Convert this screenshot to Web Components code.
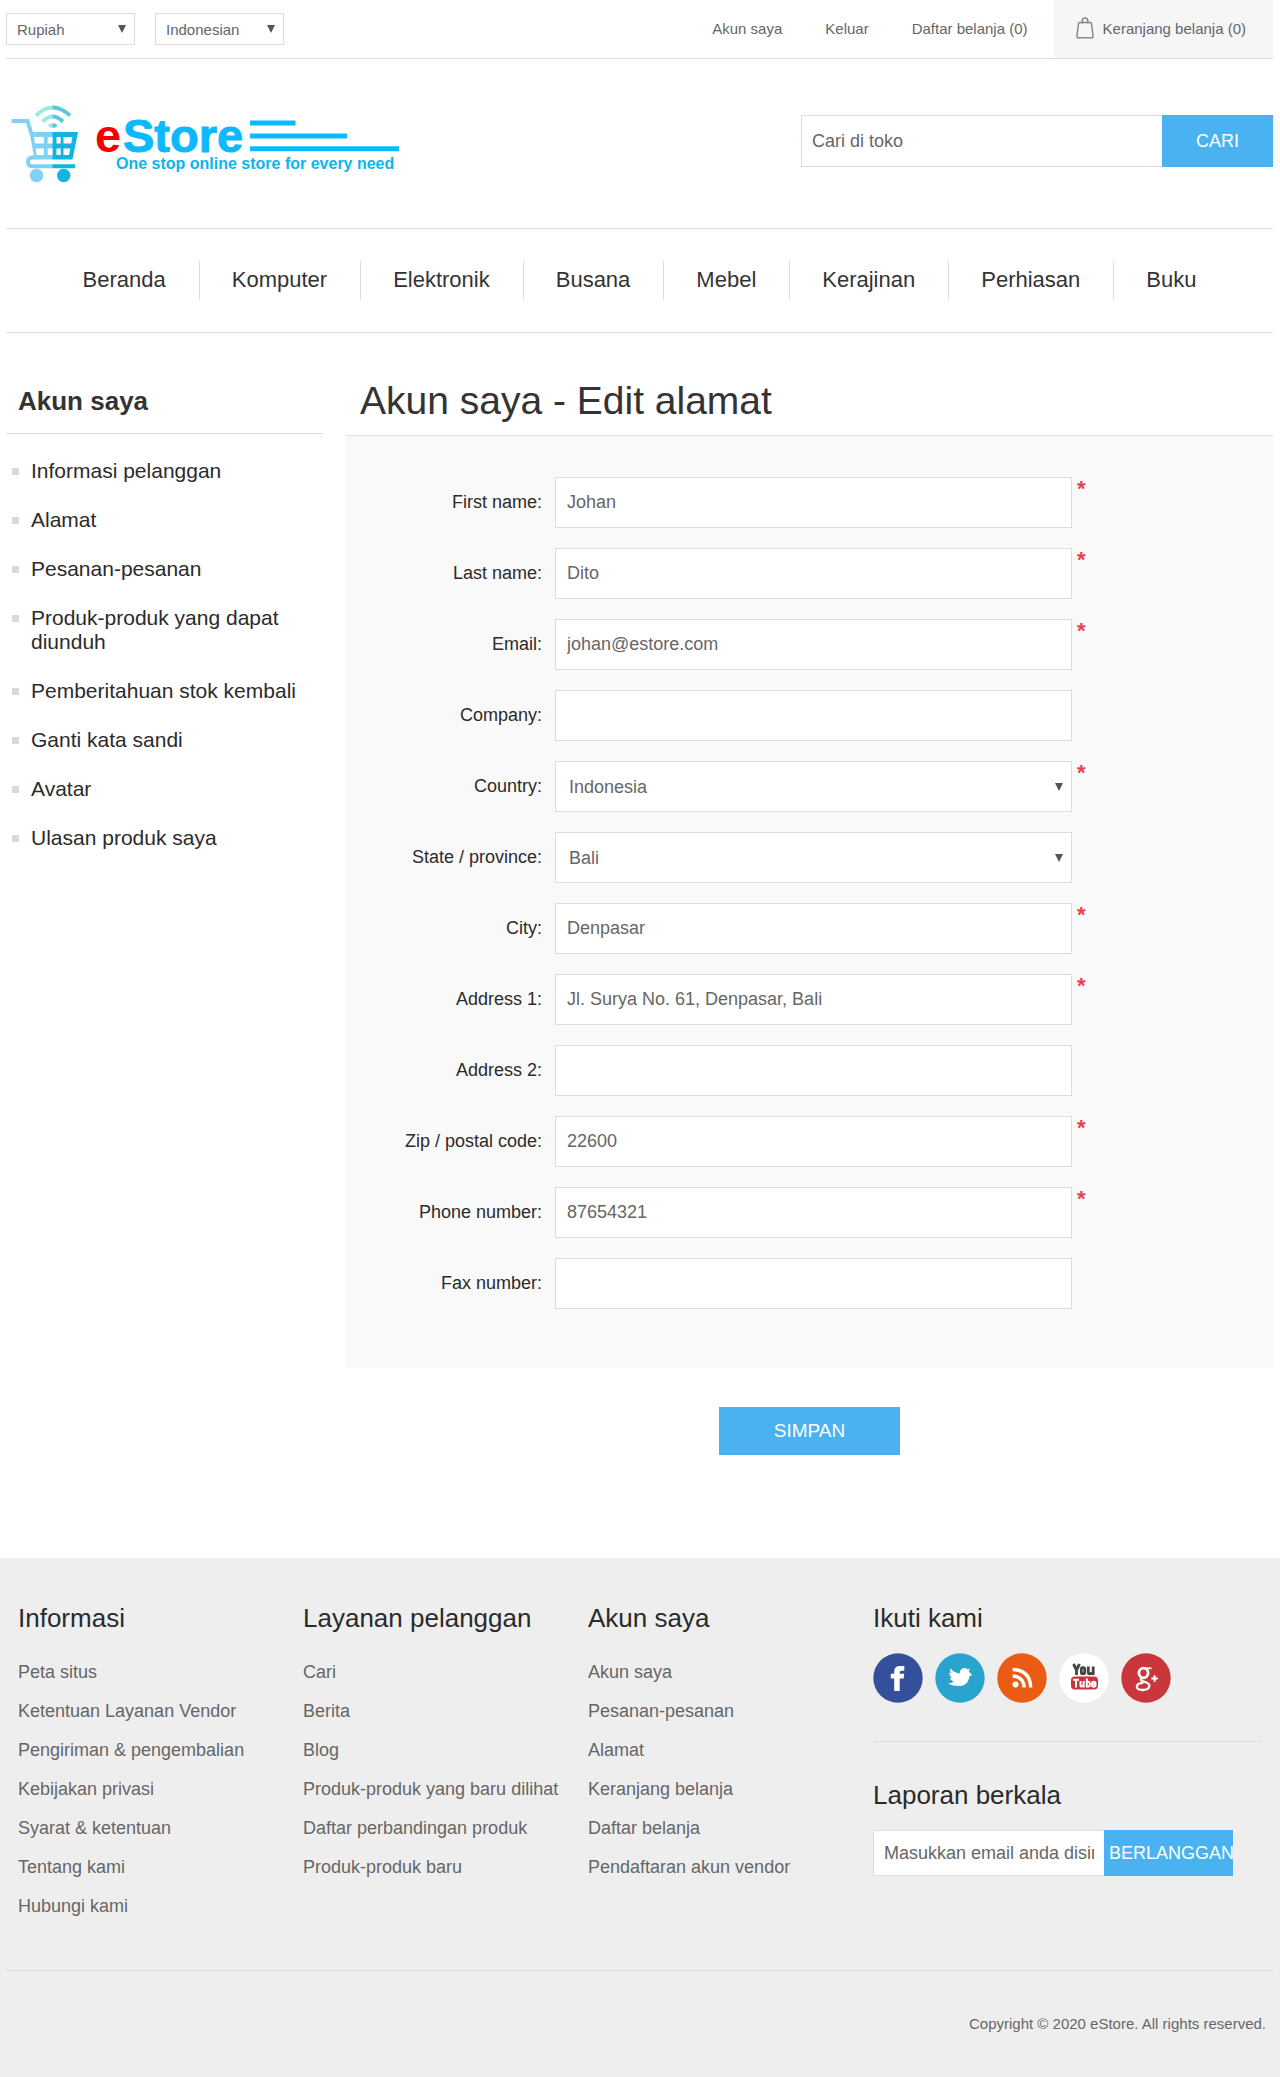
<!DOCTYPE html>
<html lang="id">
<head>
  <meta charset="UTF-8">
  <meta name="viewport" content="width=device-width, initial-scale=1.0">
  <title>eStore - Edit alamat</title>
  <style>
    :root {
      --blue: #4ab2f1;
      --line: #ddd;
      --dark: #2b2b2b;
      --text: #666;
    }
    body {
      margin: 0;
      font-family: "Liberation Sans", Arial, sans-serif;
      font-size: 18px;
      color: var(--text);
      background: #fff;
    }
    .page {
      padding: 0 7px 0 6px;
    }
    .columns {
      display: grid;
      grid-template-columns: minmax(0, 317fr) minmax(0, 927fr);
      gap: 23px;
      padding: 45px 0 103px;
    }
    .header {
      display: flex;
      justify-content: space-between;
      align-items: flex-start;
      padding-bottom: 40px;
      border-bottom: 1px solid var(--line);
    }
  </style>
</head>
<body>
  <div class="page">
    <top-bar></top-bar>
    <div class="header">
      <store-logo></store-logo>
      <store-search></store-search>
    </div>
    <store-nav>
      <a href="#">Beranda</a>
      <a href="#">Komputer</a>
      <a href="#">Elektronik</a>
      <a href="#">Busana</a>
      <a href="#">Mebel</a>
      <a href="#">Kerajinan</a>
      <a href="#">Perhiasan</a>
      <a href="#">Buku</a>
    </store-nav>
    <div class="columns">
      <account-menu heading="Akun saya">
        <a href="#">Informasi pelanggan</a>
        <a href="#">Alamat</a>
        <a href="#">Pesanan-pesanan</a>
        <a href="#">Produk-produk yang dapat diunduh</a>
        <a href="#">Pemberitahuan stok kembali</a>
        <a href="#">Ganti kata sandi</a>
        <a href="#">Avatar</a>
        <a href="#">Ulasan produk saya</a>
      </account-menu>
      <address-form heading="Akun saya - Edit alamat">
        <form-field label="First name:" value="Johan" required></form-field>
        <form-field label="Last name:" value="Dito" required></form-field>
        <form-field label="Email:" value="johan@estore.com" required></form-field>
        <form-field label="Company:"></form-field>
        <form-field label="Country:" type="select" value="Indonesia" required></form-field>
        <form-field label="State / province:" type="select" value="Bali"></form-field>
        <form-field label="City:" value="Denpasar" required></form-field>
        <form-field label="Address 1:" value="Jl. Surya No. 61, Denpasar, Bali" required></form-field>
        <form-field label="Address 2:"></form-field>
        <form-field label="Zip / postal code:" value="22600" required></form-field>
        <form-field label="Phone number:" value="87654321" required></form-field>
        <form-field label="Fax number:"></form-field>
      </address-form>
    </div>
  </div>
  <store-footer>
    <footer-block heading="Informasi">
      <a href="#">Peta situs</a>
      <a href="#">Ketentuan Layanan Vendor</a>
      <a href="#">Pengiriman &amp; pengembalian</a>
      <a href="#">Kebijakan privasi</a>
      <a href="#">Syarat &amp; ketentuan</a>
      <a href="#">Tentang kami</a>
      <a href="#">Hubungi kami</a>
    </footer-block>
    <footer-block heading="Layanan pelanggan">
      <a href="#">Cari</a>
      <a href="#">Berita</a>
      <a href="#">Blog</a>
      <a href="#">Produk-produk yang baru dilihat</a>
      <a href="#">Daftar perbandingan produk</a>
      <a href="#">Produk-produk baru</a>
    </footer-block>
    <footer-block heading="Akun saya">
      <a href="#">Akun saya</a>
      <a href="#">Pesanan-pesanan</a>
      <a href="#">Alamat</a>
      <a href="#">Keranjang belanja</a>
      <a href="#">Daftar belanja</a>
      <a href="#">Pendaftaran akun vendor</a>
    </footer-block>
    <div>
      <footer-block heading="Ikuti kami">
        <social-links></social-links>
      </footer-block>
      <footer-block heading="Laporan berkala">
        <news-letter></news-letter>
      </footer-block>
    </div>
    <span slot="copyright">Copyright © 2020 eStore. All rights reserved.</span>
  </store-footer>

<script type="text/javascript">
// small triangle shared by all the drop-downs
const arrow = `url("data:image/svg+xml,%3Csvg xmlns='http://www.w3.org/2000/svg' width='8' height='8'%3E%3Cpath d='M0 0h8L4 8z' fill='%23555'/%3E%3C/svg%3E")`;

// currency, language and the account links
customElements.define('top-bar', class extends HTMLElement {
  constructor() {
    super();
    this.attachShadow({mode: 'open'}).innerHTML = `
      <style>
        :host {
          display: flex;
          align-items: center;
          height: 58px;
          border-bottom: 1px solid var(--line);
          font-size: 15px;
        }
        select {
          appearance: none;
          box-sizing: border-box;
          width: 129px;
          height: 32px;
          margin-right: 20px;
          padding: 0 20px 0 10px;
          border: 1px solid var(--line);
          border-radius: 0;
          background: #fff ${arrow} no-repeat right 8px center;
          font: inherit;
          color: inherit;
        }
        a {
          color: inherit;
          text-decoration: none;
        }
        .links {
          display: flex;
          gap: 43px;
          margin-left: auto;
          padding: 0 26px 2px 0;
        }
        .cart {
          display: flex;
          align-items: center;
          gap: 9px;
          height: 56px;
          padding: 0 27px 2px 22px;
          background: #f6f6f6;
        }
      </style>
      <select aria-label="Mata uang"><option>Rupiah</option></select>
      <select aria-label="Bahasa"><option>Indonesian</option></select>
      <div class="links">
        <a href="#">Akun saya</a>
        <a href="#">Keluar</a>
        <a href="#">Daftar belanja (0)</a>
      </div>
      <a class="cart" href="#">
        <svg width="18" height="22" viewBox="0 0 18 22" fill="none" stroke="#888" stroke-width="1.5">
          <path d="M3.500 5.500h11q.8 0 1 1l1.500 12q.2 2.300-1.500 2.300h-13q-1.700 0-1.500-2.300l1.500-12q.2-1 1-1z"/>
          <path d="M6.200 6.500V4Q6.200 1 9 1t2.800 3v2.500"/>
        </svg>
        <span>Keranjang belanja (0)</span>
      </a>
    `;
  }
});

customElements.define('store-logo', class extends HTMLElement {
  constructor() {
    super();
    this.attachShadow({mode: 'open'}).innerHTML = `
      <style>
        :host {
          display: block;
          padding-top: 41px;
        }
        svg {
          display: block;
        }
        text {
          font-family: "Liberation Sans", Arial, sans-serif;
          font-weight: bold;
          stroke-linejoin: round;
        }
      </style>
      <a href="#" aria-label="eStore">
        <svg width="400" height="88" viewBox="6 100 400 88">
          <defs>
            <linearGradient id="cart" gradientUnits="userSpaceOnUse" x1="52" x2="53" y1="0" y2="0">
              <stop stop-color="#80d2f5"/><stop offset="1" stop-color="#12b4e0"/>
            </linearGradient>
            <linearGradient id="wave" gradientUnits="userSpaceOnUse" x1="52" x2="53" y1="0" y2="0">
              <stop stop-color="#98ebe0"/><stop offset="1" stop-color="#58c9db"/>
            </linearGradient>
          </defs>
          <g fill="none" stroke="url(#wave)" stroke-width="4">
            <path d="M36 115.500q16.500-16 34 0"/>
            <path d="M42.500 121.500q10-10 20.500 0"/>
          </g>
          <ellipse cx="52.700" cy="125.500" rx="4.300" ry="2.300" fill="url(#wave)"/>
          <path d="M11.500 121H27.500l4 13" fill="none" stroke="url(#cart)" stroke-width="4"/>
          <path fill="url(#cart)" fill-rule="evenodd" d="M29.500 132H78l-5.500 27.500h-38z
            M34 137l1 6.500h8.800V137z M47.700 137v6.500h4.800V137z M56.500 137v6.500h4.200V137z M63.500 137v6.500h7.700l1.200-6.500z
            M35.600 148.500l1 6.500h7.200v-6.500z M47.700 148.500v6.500h4.800v-6.500z M56.500 148.500v6.500h4.200v-6.500z M63.500 148.500v6.500h5.500l1.200-6.500z"/>
          <path d="M36 157.500h-4q-4 .5-4 4.500t4.500 4.300H75" fill="none" stroke="url(#cart)" stroke-width="4"/>
          <circle cx="36.500" cy="175.500" r="6.700" fill="#80d2f5"/>
          <circle cx="63.700" cy="175.500" r="6.700" fill="#12b4e0"/>
          <text x="95" y="152" font-size="47" fill="#f50000">e</text>
          <text x="123" y="152" font-size="47" fill="#0cb9fb" stroke="#0cb9fb">Store</text>
          <text x="116" y="169" font-size="16" fill="#0cb4ef">One stop online store for every need</text>
          <path d="M250 120.500h45.500v5H250zM250 133.500h97v5h-97zM250 146.300h149v5H250z" fill="#0cb9fb"/>
        </svg>
      </a>
    `;
  }
});

customElements.define('store-search', class extends HTMLElement {
  constructor() {
    super();
    this.attachShadow({mode: 'open'}).innerHTML = `
      <style>
        :host {
          flex: 0 1 472px;
          padding-top: 56px;
        }
        form {
          display: flex;
          height: 52px;
        }
        input {
          flex: 1;
          min-width: 0;
          padding: 0 10px;
          border: 1px solid var(--line);
          border-right: 0;
          font: inherit;
          color: inherit;
        }
        input::placeholder {
          color: inherit;
        }
        button {
          width: 111px;
          border: 0;
          background: var(--blue);
          font: inherit;
          color: #fff;
        }
      </style>
      <form>
        <input type="text" placeholder="Cari di toko" aria-label="Cari di toko">
        <button type="button">CARI</button>
      </form>
    `;
  }
});

customElements.define('store-nav', class extends HTMLElement {
  constructor() {
    super();
    this.attachShadow({mode: 'open'}).innerHTML = `
      <style>
        :host {
          display: block;
          border-bottom: 1px solid var(--line);
          font-size: 22px;
        }
        nav {
          display: flex;
          justify-content: center;
          gap: 1px;
          padding: 32px 0;
        }
        ::slotted(a) {
          padding: 0 32px 2px;
          line-height: 37px;
          color: #333;
          text-decoration: none;
        }
        ::slotted(a:not(:first-child)) {
          border-left: 1px solid var(--line);
        }
      </style>
      <nav><slot></slot></nav>
    `;
  }
});

customElements.define('account-menu', class extends HTMLElement {
  constructor() {
    super();
    this.attachShadow({mode: 'open'}).innerHTML = `
      <style>
        :host {
          display: block;
          padding-top: 8px;
          color: var(--dark);
        }
        h2 {
          margin: 0 0 25px;
          padding: 0 12px 17px;
          border-bottom: 1px solid var(--line);
          font-size: 26px;
          line-height: 30px;
          color: #333;
        }
        nav {
          display: grid;
          gap: 25px;
          padding: 0 12px 0 6px;
          font-size: 21px;
          line-height: 24px;
        }
        ::slotted(a) {
          padding-left: 19px;
          background: linear-gradient(#d9d9d9, #d9d9d9) no-repeat left 9px / 7px 7px;
          color: inherit;
          text-decoration: none;
        }
      </style>
      <h2>${this.getAttribute('heading')}</h2>
      <nav><slot></slot></nav>
    `;
  }
});

customElements.define('form-field', class extends HTMLElement {
  constructor() {
    super();
    const value = this.getAttribute('value') || '';
    const control = this.getAttribute('type') === 'select'
      ? `<select id="field"><option>${value}</option></select>`
      : `<input id="field" type="text" value="${value}">`;
    this.attachShadow({mode: 'open'}).innerHTML = `
      <style>
        :host {
          display: grid;
          grid-template-columns: minmax(0, 209fr) minmax(0, 517fr) minmax(0, 201fr);
        }
        label {
          align-self: center;
          padding-right: 13px;
          text-align: right;
          color: var(--dark);
        }
        input, select {
          appearance: none;
          box-sizing: border-box;
          width: 100%;
          height: 51px;
          padding: 0 11px;
          border: 1px solid var(--line);
          border-radius: 0;
          background: #fff;
          font: inherit;
          color: inherit;
        }
        select {
          padding: 0 24px 0 13px;
          background: #fff ${arrow} no-repeat right 8px center;
        }
        .required {
          padding-left: 5px;
          font-size: 22px;
          font-weight: bold;
          line-height: 24px;
          color: #e4434b;
        }
      </style>
      <label for="field">${this.getAttribute('label')}</label>
      ${control}
      ${this.hasAttribute('required') ? '<span class="required">*</span>' : ''}
    `;
  }
});

customElements.define('address-form', class extends HTMLElement {
  constructor() {
    super();
    this.attachShadow({mode: 'open'}).innerHTML = `
      <style>
        :host {
          display: block;
        }
        h1 {
          margin: 0;
          padding: 0 14px 12px;
          border-bottom: 1px solid var(--line);
          font-size: 39px;
          font-weight: normal;
          line-height: 45px;
          color: #333;
        }
        .fields {
          display: grid;
          gap: 20px;
          padding: 41px 0 59px;
          background: #f9f9f9;
        }
        button {
          display: block;
          width: 181px;
          height: 48px;
          margin: 39px auto 0;
          border: 0;
          background: var(--blue);
          font: inherit;
          font-size: 19px;
          color: #fff;
        }
      </style>
      <form>
        <h1>${this.getAttribute('heading')}</h1>
        <div class="fields"><slot></slot></div>
        <button type="button">SIMPAN</button>
      </form>
    `;
  }
});

customElements.define('store-footer', class extends HTMLElement {
  constructor() {
    super();
    this.attachShadow({mode: 'open'}).innerHTML = `
      <style>
        :host {
          display: block;
          padding: 45px 7px 43px 6px;
          background: #eee;
        }
        .blocks {
          display: grid;
          grid-template-columns: repeat(3, minmax(0, 285fr)) minmax(0, 388fr);
          padding: 0 12px 44px;
        }
        .bottom {
          padding: 43px 7px 0;
          border-top: 1px solid var(--line);
          font-size: 15px;
          line-height: 20px;
          text-align: right;
        }
      </style>
      <footer>
        <div class="blocks"><slot></slot></div>
        <div class="bottom"><slot name="copyright"></slot></div>
      </footer>
    `;
  }
});

customElements.define('footer-block', class extends HTMLElement {
  constructor() {
    super();
    this.attachShadow({mode: 'open'}).innerHTML = `
      <style>
        :host {
          display: block;
        }
        h3 {
          margin: 0 0 20px;
          font-size: 26px;
          font-weight: normal;
          line-height: 30px;
          color: var(--dark);
        }
        ::slotted(a) {
          display: block;
          line-height: 39px;
          color: inherit;
          text-decoration: none;
        }
      </style>
      <h3>${this.getAttribute('heading')}</h3>
      <slot></slot>
    `;
  }
});

customElements.define('social-links', class extends HTMLElement {
  constructor() {
    super();
    this.attachShadow({mode: 'open'}).innerHTML = `
      <style>
        :host {
          display: flex;
          gap: 12px;
          margin-bottom: 38px;
          padding-bottom: 38px;
          border-bottom: 1px solid var(--line);
        }
        a, svg {
          display: block;
        }
      </style>
      <a href="#" aria-label="Facebook">
        <svg width="50" height="50" viewBox="0 0 50 50">
          <circle cx="25" cy="25" r="24.700" fill="#34509a"/>
          <path d="M21.200 38V25.500h-3.400v-4.700h3.400v-2.300q0-5.500 5.500-5.500h4.600v4.700h-2.700q-1.900 0-1.900 1.800v1.300h4.500l-.6 4.700h-3.900V38z" fill="#fff"/>
        </svg>
      </a>
      <a href="#" aria-label="Twitter">
        <svg width="50" height="50" viewBox="0 0 50 50">
          <circle cx="25" cy="25" r="24.700" fill="#2ba3cf"/>
          <path d="M13 30.500q3.500 0 5.700-2-3-.7-3.800-3.500l1.800-.2q-2.700-2-2.600-5.300 1 .7 2.100.7-1.900-2.500-.6-4.700 4 4.600 9.200 5 0-5.200 4.700-5.400 2 0 3.300 1.400l2.500-.9-1.600 2.600q1.200 1.800 3.500 3.700l-2.800 1.300q-.8 9-9.400 9.800-6.600.4-12-2.500z" fill="#fff"/>
        </svg>
      </a>
      <a href="#" aria-label="RSS">
        <svg width="50" height="50" viewBox="0 0 50 50">
          <circle cx="25" cy="25" r="24.700" fill="#ea5b14"/>
          <g fill="none" stroke="#fff" stroke-width="3.400">
            <path d="M15.700 16.500Q33 17 33.700 34.500"/>
            <path d="M15.700 23Q26.500 23.500 27.200 34.500"/>
          </g>
          <circle cx="18.500" cy="31.500" r="3" fill="#fff"/>
        </svg>
      </a>
      <a href="#" aria-label="YouTube">
        <svg width="50" height="50" viewBox="0 0 50 50">
          <circle cx="25" cy="25" r="24.700" fill="#fff"/>
          <g fill="none" stroke="#444" stroke-width="2.800">
            <path d="M14.500 11l3 6 3-6M17.500 16v6"/>
            <rect x="22.300" y="14.700" width="3.400" height="6" rx="1.500"/>
            <path d="M29.300 13.500v6.200q.3 1.500 2 1t2.200-1.200M34.200 13.500V22"/>
          </g>
          <rect x="12" y="23.500" width="27" height="13" rx="4" fill="#c73339"/>
          <g fill="none" stroke="#fff" stroke-width="2">
            <path d="M14 26.700h6M17 27v7.500"/>
            <path d="M21.500 28v4.700q.3 1.300 1.800.5l1.200-1M24.700 28v6.500"/>
            <path d="M27.800 25.500v8h1.700q1.200 0 1.200-1.200V30q0-1.200-1.200-1.200h-1.700"/>
            <path d="M33 31.200h3.500v-1q0-1.500-1.700-1.500T33 30.200v2.300q0 1.200 1.800 1.200t1.700-1.400"/>
          </g>
        </svg>
      </a>
      <a href="#" aria-label="Google Plus">
        <svg width="50" height="50" viewBox="0 0 50 50">
          <circle cx="25" cy="25" r="24.700" fill="#c9373c"/>
          <g fill="none" stroke="#fff">
            <ellipse cx="22.500" cy="20" rx="4.600" ry="4.800" stroke-width="2.800"/>
            <path d="M23 15.300h7.500" stroke-width="1.800"/>
            <path d="M20.500 25q-1.500 1.800.8 3l4 1.500q4.200 1.800 2.700 5-1.500 2.500-6 2.500-6-.1-6.200-3.300.2-3.700 6.500-3.900" stroke-width="2.300"/>
            <path d="M30.300 25.500h6.600M33.600 22.200v6.600" stroke-width="2"/>
          </g>
        </svg>
      </a>
    `;
  }
});

customElements.define('news-letter', class extends HTMLElement {
  constructor() {
    super();
    this.attachShadow({mode: 'open'}).innerHTML = `
      <style>
        :host {
          display: block;
        }
        form {
          display: flex;
          height: 46px;
          margin-right: 28px;
        }
        input {
          flex: 1;
          min-width: 0;
          padding: 0 10px;
          border: 1px solid var(--line);
          border-right: 0;
          background: #fff;
          font: inherit;
          color: inherit;
        }
        input::placeholder {
          color: inherit;
        }
        button {
          width: 129px;
          padding: 0 0 0 5px;
          border: 0;
          background: var(--blue);
          font: inherit;
          color: #fff;
          text-align: left;
          overflow: hidden;
        }
      </style>
      <form>
        <input type="text" placeholder="Masukkan email anda disini" aria-label="Email">
        <button type="button">BERLANGGAN</button>
      </form>
    `;
  }
});
</script>
</body>
</html>
